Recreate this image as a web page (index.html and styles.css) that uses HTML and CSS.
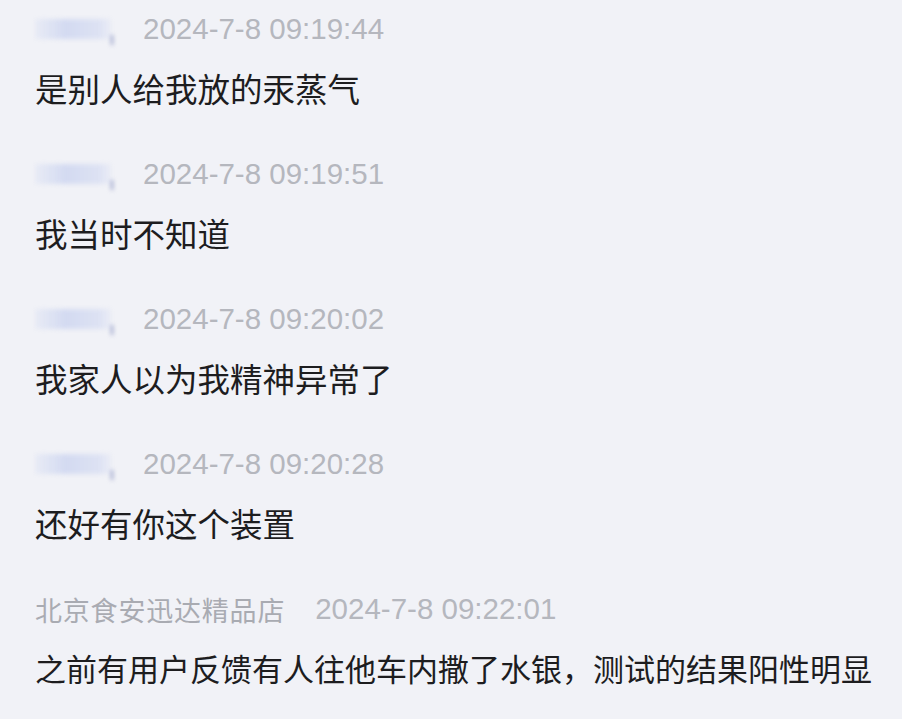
FILE: index.html
```html
<!DOCTYPE html>
<html lang="zh-CN">
<head>
  <meta charset="UTF-8" />
  <meta name="viewport" content="width=device-width, initial-scale=1.0" />
  <title>聊天记录</title>
  <link rel="stylesheet" href="styles.css">
</head>
<body>

<div class="chat">
  <div class="msg">
    <div class="meta">
      <span class="name blurred"><span class="tick"></span></span>
      <span class="time">2024-7-8 09:19:44</span>
    </div>
    <p class="text">是别人给我放的汞蒸气</p>
  </div>

  <div class="msg">
    <div class="meta">
      <span class="name blurred"><span class="tick"></span></span>
      <span class="time">2024-7-8 09:19:51</span>
    </div>
    <p class="text">我当时不知道</p>
  </div>

  <div class="msg">
    <div class="meta">
      <span class="name blurred"><span class="tick"></span></span>
      <span class="time">2024-7-8 09:20:02</span>
    </div>
    <p class="text">我家人以为我精神异常了</p>
  </div>

  <div class="msg">
    <div class="meta">
      <span class="name blurred"><span class="tick"></span></span>
      <span class="time">2024-7-8 09:20:28</span>
    </div>
    <p class="text">还好有你这个装置</p>
  </div>

  <div class="msg">
    <div class="meta">
      <span class="name">北京食安迅达精品店</span>
      <span class="time">2024-7-8 09:22:01</span>
    </div>
    <p class="text long">之前有用户反馈有人往他车内撒了水银，测试的结果阳性明显</p>
  </div>
</div>

</body>
</html>
```

FILE: styles.css
```css
html, body {
  margin: 0;
  background: #f1f2f7;
}
body {
  font-family: "Liberation Sans", "Noto Sans CJK SC", sans-serif;
  padding: 9px 0 0 35px;
}

.msg {
  margin-bottom: 46px;
}
.meta {
  display: flex;
  align-items: center;
  height: 40px;
  gap: 30px;
}
.name {
  font-family: "Noto Sans CJK SC", sans-serif;
  font-size: 27px;
  color: #a9abb2;
  letter-spacing: 0.8px;
}
.time {
  font-size: 29.5px;
  color: #b5b7be;
}

/* 打码的用户名 */
.blurred {
  position: relative;
  display: inline-block;
  width: 76px;
  height: 20px;
  margin-right: 2px;
  background: linear-gradient(90deg, rgba(214,221,242,.3), #d3daf1 40%, #dde2f3 85%, rgba(225,229,244,.4));
  filter: blur(2px);
}
.tick {
  position: absolute;
  right: -2px;
  bottom: -6px;
  width: 2px;
  height: 10px;
  background: #8d97c4;
}

.text {
  margin: 19px 0 0;
  height: 40px;
  line-height: 40px;
  font-family: "Noto Sans CJK SC", sans-serif;
  font-size: 32.5px;
  color: #1d1d1f;
}
.text.long {
  font-size: 31px;
}
```
